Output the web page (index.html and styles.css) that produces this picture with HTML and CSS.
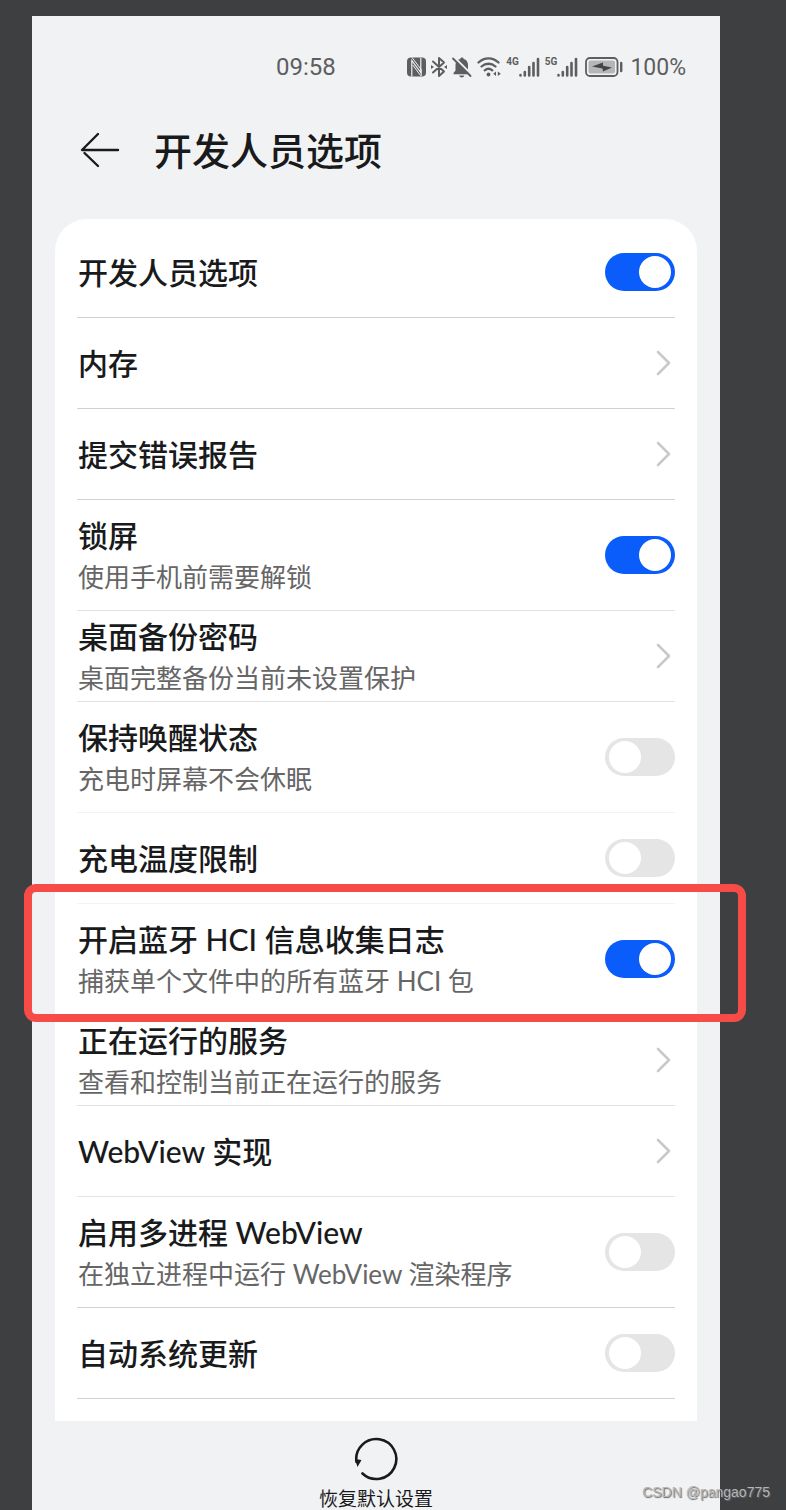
FILE: index.html
```html
<!DOCTYPE html>
<html lang="zh-CN">
<head>
    <meta charset="UTF-8">
    <meta name="viewport" content="width=device-width, initial-scale=1.0">
    <title>开发人员选项</title>
    <link rel="stylesheet" href="styles.css">
</head>
<body>
    <div class="phone">
        <div class="status-bar">
            <span class="time">09:58</span>
            <div class="status-icons">
                <svg width="19" height="20" viewBox="0 0 19 20">
                    <rect x="0" y="0.500" width="19" height="19" rx="4" fill="#5d5e60"/>
                    <path d="M4.800 19.500V3.500L13.800 15.500V1" fill="none" stroke="#f1f2f4" stroke-width="1.200"/>
                    <path d="M5 .5L14.200 12.500V19M5.800 8L13.500 18.500" fill="none" stroke="#f1f2f4" stroke-width="1"/>
                </svg>
                <svg width="16" height="22" viewBox="0 0 16 22" fill="none" stroke="#5d5e60" stroke-width="2" stroke-linejoin="round" stroke-linecap="round">
                    <path d="M2 5.500L13 15.500L8 20V2L13 6.500L2 16.500"/>
                    <path d="M0 9L3 11L0 13zM16 9L13 11L16 13z" fill="#5d5e60" stroke="none"/>
                </svg>
                <svg width="20" height="22" viewBox="0 0 20 22">
                    <path d="M10 1.500c1 0 1.600.7 1.700 1.500 2.900.8 4.300 3 4.300 6v5.500l2 2.500v1.200H1.500V17l2-2.500V9c0-3 1.700-5.200 4.700-6 .1-.8.800-1.500 1.800-1.500z" fill="#5d5e60"/>
                    <path d="M7.200 19.500h5.200c-.4 1.300-1.300 2-2.600 2s-2.200-.7-2.600-2z" fill="#5d5e60"/>
                    <path d="M2.500 1.500L20 19" stroke="#f1f2f4" stroke-width="2"/>
                    <path d="M1 2.500L18.500 20" stroke="#5d5e60" stroke-width="1.800" stroke-linecap="round"/>
                </svg>
                <svg width="24" height="22" viewBox="0 0 24 22" fill="none" stroke="#5d5e60" stroke-width="2.300" stroke-linecap="round">
                    <path d="M1.500 6.500C7.500 1 15.500 1 21.500 6.500"/>
                    <path d="M4.500 10.500C8.700 6.800 14.300 6.800 18.500 10.500"/>
                    <path d="M7.700 14.300C10 12.400 13 12.400 15.300 14.300"/>
                    <circle cx="11.500" cy="18.500" r="1.900" fill="#5d5e60" stroke="none"/>
                    <path d="M19 15.500V20L16.200 17.800zM20.800 15.500V20L23.800 17.800z" fill="#5d5e60" stroke="none"/>
                </svg>
                <span class="signal">
                    <span class="net">4G</span>
                    <svg width="21" height="20" viewBox="0 0 21 20" stroke="#5d5e60" stroke-width="2.600" stroke-linecap="round">
                        <path d="M1.500 18v.5M5.800 15v3.500M10.200 10v8.500M14.500 6v12.500M19 2v16.500"/>
                    </svg>
                </span>
                <span class="signal">
                    <span class="net">5G</span>
                    <svg width="21" height="20" viewBox="0 0 21 20" stroke="#5d5e60" stroke-width="2.600" stroke-linecap="round">
                        <path d="M1.500 18v.5M5.800 15v3.500M10.200 10v8.500M14.500 6v12.500M19 2v16.500"/>
                    </svg>
                </span>
                <svg class="battery" width="38" height="20" viewBox="0 0 38 20">
                    <rect x="1" y="1" width="31.500" height="18" rx="4" fill="none" stroke="#5d5e60" stroke-width="1.800"/>
                    <rect x="3.500" y="3.500" width="26.500" height="13" rx="2" fill="#b5b6b8"/>
                    <path d="M7 9.500L18 5.500V8.800L27 10.500L18 14.500L17.500 11.500z" fill="#444547"/>
                    <path d="M36.200 6v8" stroke="#5d5e60" stroke-width="2.400" stroke-linecap="round"/>
                </svg>
                <span class="percent">100%</span>
            </div>
        </div>

        <header class="title-bar">
            <button class="back" type="button" aria-label="返回">
                <svg width="40" height="36" viewBox="0 0 40 36" fill="none" stroke="#191a1c" stroke-width="2.400" stroke-linecap="round" stroke-linejoin="round">
                    <path d="M18 2L2 18H38M4.500 21L18 34"/>
                </svg>
            </button>
            <h1>开发人员选项</h1>
        </header>

        <ul class="card">
            <li class="row">
                <label class="text" for="dev"><span class="name">开发人员选项</span></label>
                <input class="switch" id="dev" type="checkbox" checked>
            </li>
            <li class="row">
                <a class="text" href="#memory"><span class="name">内存</span></a>
                <svg class="chevron" viewBox="0 0 16 26"><path d="M2 2L13 13L2 24"/></svg>
            </li>
            <li class="row">
                <a class="text" href="#report"><span class="name">提交错误报告</span></a>
                <svg class="chevron" viewBox="0 0 16 26"><path d="M2 2L13 13L2 24"/></svg>
            </li>
            <li class="row tall light">
                <label class="text" for="lock"><span class="name">锁屏</span><span class="desc">使用手机前需要解锁</span></label>
                <input class="switch" id="lock" type="checkbox" checked>
            </li>
            <li class="row light">
                <a class="text" href="#backup"><span class="name">桌面备份密码</span><span class="desc">桌面完整备份当前未设置保护</span></a>
                <svg class="chevron" viewBox="0 0 16 26"><path d="M2 2L13 13L2 24"/></svg>
            </li>
            <li class="row tall faint">
                <label class="text" for="awake"><span class="name">保持唤醒状态</span><span class="desc">充电时屏幕不会休眠</span></label>
                <input class="switch" id="awake" type="checkbox">
            </li>
            <li class="row faint">
                <label class="text" for="temp"><span class="name">充电温度限制</span></label>
                <input class="switch" id="temp" type="checkbox">
            </li>
            <li class="row tall marked">
                <label class="text" for="hci"><span class="name">开启蓝牙 HCI 信息收集日志</span><span class="desc">捕获单个文件中的所有蓝牙 HCI 包</span></label>
                <input class="switch" id="hci" type="checkbox" checked>
            </li>
            <li class="row light">
                <a class="text" href="#services"><span class="name">正在运行的服务</span><span class="desc">查看和控制当前正在运行的服务</span></a>
                <svg class="chevron" viewBox="0 0 16 26"><path d="M2 2L13 13L2 24"/></svg>
            </li>
            <li class="row light">
                <a class="text" href="#webview"><span class="name">WebView 实现</span></a>
                <svg class="chevron" viewBox="0 0 16 26"><path d="M2 2L13 13L2 24"/></svg>
            </li>
            <li class="row tall">
                <label class="text" for="multi"><span class="name">启用多进程 WebView</span><span class="desc">在独立进程中运行 WebView 渲染程序</span></label>
                <input class="switch" id="multi" type="checkbox">
            </li>
            <li class="row">
                <label class="text" for="update"><span class="name">自动系统更新</span></label>
                <input class="switch" id="update" type="checkbox">
            </li>
        </ul>

        <button class="restore" type="button">
            <svg width="44" height="44" viewBox="0 0 44 44">
                <path d="M2.500 25A20 20 0 1 1 8.500 36.500" fill="none" stroke="#191a1c" stroke-width="2.600" stroke-linecap="round"/>
                <path d="M1 22L7.500 23L3.500 30z" fill="#191a1c"/>
            </svg>
            恢复默认设置
        </button>
    </div>
    <div class="watermark">CSDN @pangao775</div>
</body>
</html>
```

FILE: styles.css
```css
* {
    box-sizing: border-box;
}
body {
    position: relative;
    margin: 0;
    padding: 16px 66px 0 32px;
    min-height: 100vh;
    background-color: #3e3f41;
    color: #191a1c;
    font-family: Lato, "Noto Sans CJK SC", sans-serif;
}
.phone {
    min-height: calc(100vh - 16px);
    background-color: #f1f2f4;
}
svg {
    display: block;
    flex: none;
}

/* status bar */
.status-bar {
    display: flex;
    align-items: center;
    justify-content: space-between;
    height: 102px;
    padding: 0 34px 0 244px;
    color: #5d5e60;
    font-family: Roboto, sans-serif;
    font-size: 24px;
}
.status-icons {
    display: flex;
    align-items: center;
    gap: 5px;
}
.signal {
    display: flex;
    align-items: flex-start;
}
.net {
    font-size: 10px;
    font-weight: bold;
    line-height: 10px;
}
.battery {
    margin: 0 2px;
}
.percent {
    font-size: 23px;
}

/* title */
.title-bar {
    display: flex;
    align-items: center;
    gap: 34px;
    height: 64px;
    margin-bottom: 37px;
    padding-left: 48px;
}
.back {
    padding: 0;
    border: none;
    background: none;
    cursor: pointer;
}
h1 {
    margin: 0;
    font-size: 38px;
    font-weight: 500;
    line-height: 64px;
}

/* settings list */
.card {
    margin: 0 23px;
    padding: 8px 22px 22px;
    list-style: none;
    background-color: #fff;
    border-radius: 32px 32px 0 0;
}
.row {
    display: flex;
    align-items: center;
    justify-content: space-between;
    height: 91px;
    border-bottom: 1px solid #d0d1d2;
}
.tall {
    height: 111px;
}
.light {
    border-color: #e2e2e3;
}
.faint {
    border-color: #f3f3f4;
}
.text {
    display: flex;
    flex: 1;
    flex-direction: column;
    padding-left: 1px;
    color: inherit;
    text-decoration: none;
}
.name {
    font-size: 30px;
    font-weight: 500;
    line-height: 44px;
}
.desc {
    color: #666;
    font-size: 26px;
    line-height: 40px;
}
.switch {
    appearance: none;
    flex: none;
    display: flex;
    width: 70px;
    height: 38px;
    margin: 0;
    padding: 3px 4px;
    border-radius: 19px;
    background-color: #e5e5e5;
    cursor: pointer;
}
.switch::before {
    content: "";
    width: 32px;
    height: 32px;
    border-radius: 50%;
    background-color: #fff;
}
.switch:checked {
    justify-content: flex-end;
    background-color: #0a5cfb;
}
.chevron {
    width: 16px;
    height: 26px;
    margin-right: 3px;
    fill: none;
    stroke: #c9c9c9;
    stroke-width: 2.6;
    stroke-linecap: round;
    stroke-linejoin: round;
}

/* red frame around the bluetooth log row */
.marked {
    position: relative;
}
.marked::after {
    content: "";
    position: absolute;
    top: -20px;
    right: -71px;
    bottom: -8px;
    left: -53px;
    border: 8px solid #f74b47;
    border-radius: 12px;
    pointer-events: none;
}

.restore {
    display: flex;
    flex-direction: column;
    align-items: center;
    gap: 7px;
    margin: 0 auto;
    padding: 16px 0 0;
    border: none;
    background: none;
    color: inherit;
    font-family: inherit;
    font-size: 19px;
    line-height: 22px;
    cursor: pointer;
}
.watermark {
    position: absolute;
    right: 16px;
    bottom: 8px;
    color: #b4b5b7;
    font-family: "Liberation Sans", sans-serif;
    font-size: 14px;
    line-height: 20px;
    text-shadow: 1px 1px 1px #666;
}
```
